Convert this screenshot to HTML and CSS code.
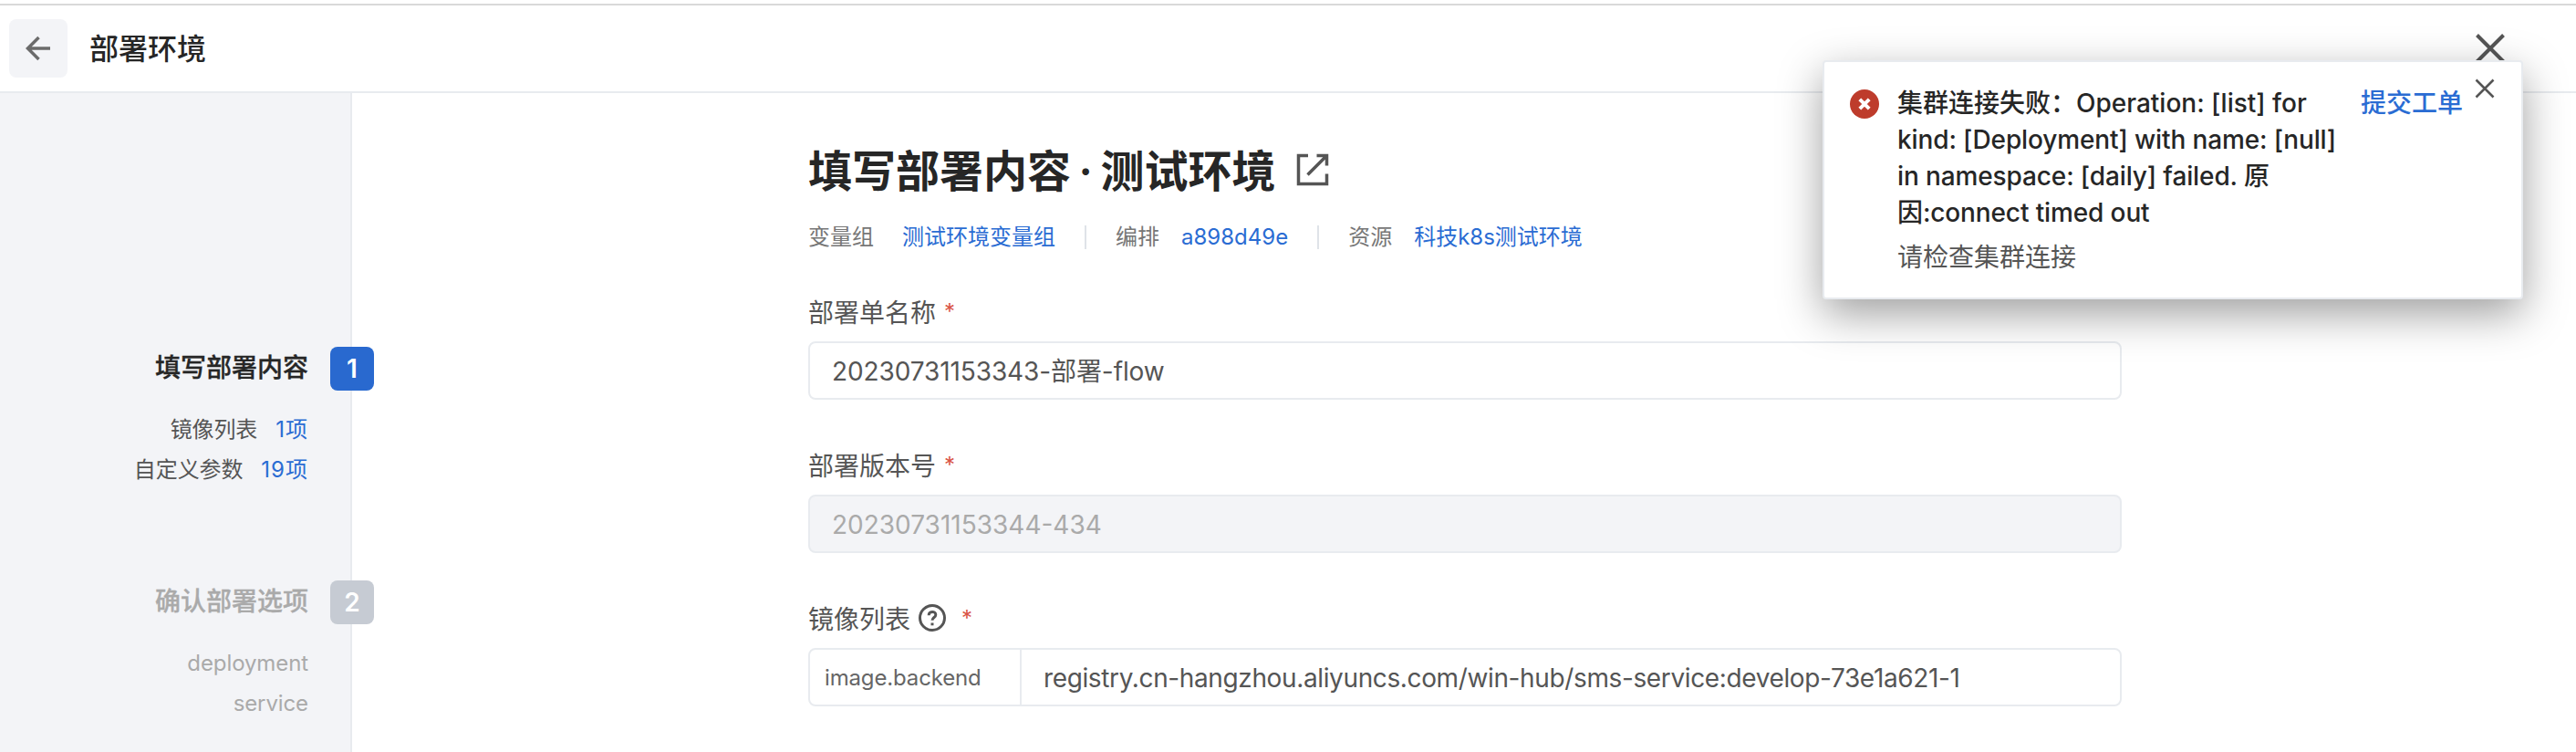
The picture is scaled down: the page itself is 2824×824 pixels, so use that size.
FILE: index.html
```html
<!DOCTYPE html>
<html lang="zh-CN">

<head>
    <meta charset="UTF-8">
    <meta name="viewport" content="width=device-width, initial-scale=1.0">
    <title>部署环境</title>
    <link rel="stylesheet" href="styles.css">
</head>

<body>
    <header class="header">
        <button class="back" type="button" aria-label="返回">
            <svg width="28" height="28" viewBox="0 0 28 28">
                <path d="M27 14H3M14.5 2L2.5 14L14.5 26" />
            </svg>
        </button>
        <h1 class="header-title">部署环境</h1>
        <svg class="header-close" width="34" height="34" viewBox="0 0 34 34">
            <path d="M2.5 2.5L31.5 31.5M31.5 2.5L2.5 31.5" />
        </svg>
    </header>

    <div class="container">
        <aside class="sidebar">
            <div class="step active">
                <div class="step-head">
                    <span class="step-name">填写部署内容</span>
                    <span class="step-num">1</span>
                </div>
                <div class="step-item">镜像列表<a>1项</a></div>
                <div class="step-item">自定义参数<a>19项</a></div>
            </div>
            <div class="step">
                <div class="step-head">
                    <span class="step-name">确认部署选项</span>
                    <span class="step-num">2</span>
                </div>
                <div class="step-item">deployment</div>
                <div class="step-item">service</div>
            </div>
        </aside>

        <main class="main">
            <div class="title">
                <h2>填写部署内容 · 测试环境</h2>
                <svg width="36" height="36" viewBox="0 0 36 36">
                    <path d="M13 2.5H2.5V33.5H33.5V22.500M22.500 2.500H33.500V13.500M33 3L12.500 23.500" />
                </svg>
            </div>
            <div class="meta">
                <div class="meta-item group"><span>变量组</span><a>测试环境变量组</a></div>
                <div class="meta-item"><span>编排</span><a>a898d49e</a></div>
                <div class="meta-item"><span>资源</span><a>科技k8s测试环境</a></div>
            </div>

            <div class="field">
                <label for="name">部署单名称<i>*</i></label>
                <input id="name" class="name" type="text" value="20230731153343-部署-flow">
            </div>
            <div class="field">
                <label for="version">部署版本号<i>*</i></label>
                <input id="version" type="text" value="20230731153344-434" disabled>
            </div>
            <div class="field">
                <label for="image">镜像列表
                    <svg width="32" height="32" viewBox="0 0 32 32">
                        <circle cx="16" cy="16" r="13.500" />
                        <path d="M12.200 13.200C12.200 8.200 19.800 8.200 19.800 12.700C19.800 15.500 16 15.500 16 18.800" />
                        <path d="M16 21.500V24.300" />
                    </svg>
                    <i>*</i>
                </label>
                <div class="input-group">
                    <span class="addon">image.backend</span>
                    <input id="image" type="text" value="registry.cn-hangzhou.aliyuncs.com/win-hub/sms-service:develop-73e1a621-1">
                </div>
            </div>
        </main>
    </div>

    <!-- 错误提示 -->
    <div class="notice">
        <svg class="notice-icon" width="32" height="32" viewBox="0 0 32 32">
            <circle cx="16" cy="16" r="16" />
            <path d="M10.800 10.800L21.200 21.200M21.200 10.800L10.800 21.200" />
        </svg>
        <div class="notice-content">
            <p class="notice-title"><span>集群连接失败：Operation: [list] for</span><br>kind: [Deployment] with name: [null]<br>in namespace: [daily] failed. 原<br>因:connect timed out</p>
            <p class="notice-desc">请检查集群连接</p>
        </div>
        <a class="notice-link">提交工单</a>
        <svg class="notice-close" width="22" height="22" viewBox="0 0 22 22">
            <path d="M1.500 1.500L20.500 20.500M20.500 1.500L1.500 20.500" />
        </svg>
    </div>
</body>

</html>
```
FILE: styles.css
```css
* {
    margin: 0;
    padding: 0;
    box-sizing: border-box;
}

body {
    position: relative;
    height: 824px;
    padding-top: 4px;
    overflow: hidden;
    display: flex;
    flex-direction: column;
    background: #fff;
    color: #555;
    font-family: Inter, "Noto Sans CJK SC", sans-serif;
    font-size: 28px;
}

svg {
    display: block;
    flex: none;
    fill: none;
    stroke: #555;
}

a {
    color: #2a6cd3;
}

/* 顶部栏 */
.header {
    height: 98px;
    flex: none;
    display: flex;
    align-items: center;
    padding: 0 77px 0 10px;
    border-top: 2px solid #d9d9d9;
    border-bottom: 2px solid #e8ebef;
}

.back {
    width: 64px;
    height: 64px;
    display: flex;
    justify-content: center;
    align-items: center;
    border: 0;
    border-radius: 8px;
    background: #f3f4f7;
}

.back svg {
    stroke: #6b6b6b;
    stroke-width: 3.5;
}

.header-title {
    flex: 1;
    margin-left: 24px;
    padding-top: 2px;
    color: #262626;
    font-size: 32px;
    font-weight: 500;
    line-height: 48px;
}

.header-close {
    stroke-width: 4;
}

.container {
    flex: 1;
    display: flex;
    min-height: 0;
}

/* 左侧步骤 */
.sidebar {
    width: 386px;
    flex: none;
    padding-top: 278px;
    background: #f3f4f7;
    border-right: 2px solid #e8ebef;
}

.step {
    padding-right: 46px;
    text-align: right;
    color: #aaa;
}

.step-head {
    display: flex;
    justify-content: flex-end;
    align-items: center;
    gap: 24px;
    margin: 0 -72px 21px 0;
}

.step-name {
    font-weight: 500;
    line-height: 40px;
    margin-top: -2px;
    -webkit-text-stroke: 0.3px;
}

.step-num {
    width: 48px;
    height: 48px;
    border-radius: 8px;
    background: #c6cbd3;
    color: #fff;
    font-weight: 600;
    line-height: 48px;
    text-align: center;
}

.step-item {
    height: 44px;
    font-size: 24px;
    line-height: 44px;
    letter-spacing: -0.1px;
}

.step-item a {
    margin-left: 20px;
    letter-spacing: 1px;
}

.step.active {
    height: 256px;
    color: #555;
}

.step.active .step-name {
    color: #262626;
}

.step.active .step-num {
    background: #2969cf;
}

/* 右侧表单 */
.main {
    width: 1440px;
    margin-left: 500px;
    padding-top: 50px;
}

.title {
    display: flex;
    align-items: center;
    gap: 22px;
    height: 68px;
}

.title h2 {
    margin-top: -4px;
    color: #262626;
    font-size: 48px;
    font-weight: 600;
    word-spacing: -3.5px;
    white-space: nowrap;
}

.title svg {
    stroke-width: 3.5;
}

.meta {
    display: flex;
    align-items: center;
    height: 80px;
    font-size: 24px;
    color: #777;
}

.meta-item {
    display: flex;
    gap: 24px;
    line-height: 26px;
}

.meta-item.group {
    gap: 31px;
}

.meta-item + .meta-item {
    margin-left: 32px;
    padding-left: 32px;
    border-left: 2px solid #dfe3e8;
}

.field {
    height: 168px;
    padding-top: 19px;
}

.field:last-child {
    height: auto;
}

.field label {
    display: flex;
    align-items: center;
    height: 44px;
    margin-bottom: 11px;
}

.field label svg {
    margin-left: 8px;
    margin-right: 7px;
    stroke-width: 3;
}

.field i {
    margin-left: 9px;
    color: #d95546;
    font-size: 24px;
    font-style: normal;
}

.field input {
    width: 100%;
    height: 64px;
    padding: 2px 24px 0;
    border: 2px solid #e8ebef;
    border-radius: 8px;
    background: #fff;
    color: #555;
    font: inherit;
}

.field .name {
    padding: 0 24px 2px;
    letter-spacing: -0.1px;
}

.field input:disabled {
    background: #f3f4f7;
    color: #aaa;
}

.input-group {
    display: flex;
    height: 64px;
    border: 2px solid #e8ebef;
    border-radius: 8px;
}

.input-group .addon {
    width: 232px;
    flex: none;
    padding: 1px 0 0 16px;
    border-right: 2px solid #e8ebef;
    color: #666;
    font-size: 24px;
    line-height: 60px;
    letter-spacing: -0.15px;
}

.input-group input {
    height: 60px;
    border: 0;
    letter-spacing: -0.37px;
}

/* 右上角通知 */
.notice {
    position: absolute;
    top: 66px;
    right: 58px;
    width: 768px;
    height: 262px;
    display: flex;
    padding: 24px 28px;
    border: 2px solid #e8ebef;
    border-radius: 4px;
    background: #fff;
    box-shadow: 0 16px 48px rgba(0, 0, 0, 0.38);
}

.notice-icon {
    margin-top: 6px;
    fill: #be3c2c;
    stroke: none;
}

.notice-icon path {
    stroke: #fff;
    stroke-width: 4;
}

.notice-content {
    width: 508px;
    flex: none;
    margin-left: 20px;
    white-space: nowrap;
}

.notice-title {
    padding-top: 1px;
    color: #262626;
    font-weight: 500;
    line-height: 40px;
    letter-spacing: -0.12px;
}

.notice-title span {
    letter-spacing: 0;
}

.notice-desc {
    margin-top: 9px;
    line-height: 40px;
}

.notice-link {
    flex: none;
    padding-top: 1px;
    line-height: 40px;
    font-weight: 500;
}

.notice-close {
    position: absolute;
    top: 18px;
    right: 29px;
    stroke-width: 2.5;
}
```
